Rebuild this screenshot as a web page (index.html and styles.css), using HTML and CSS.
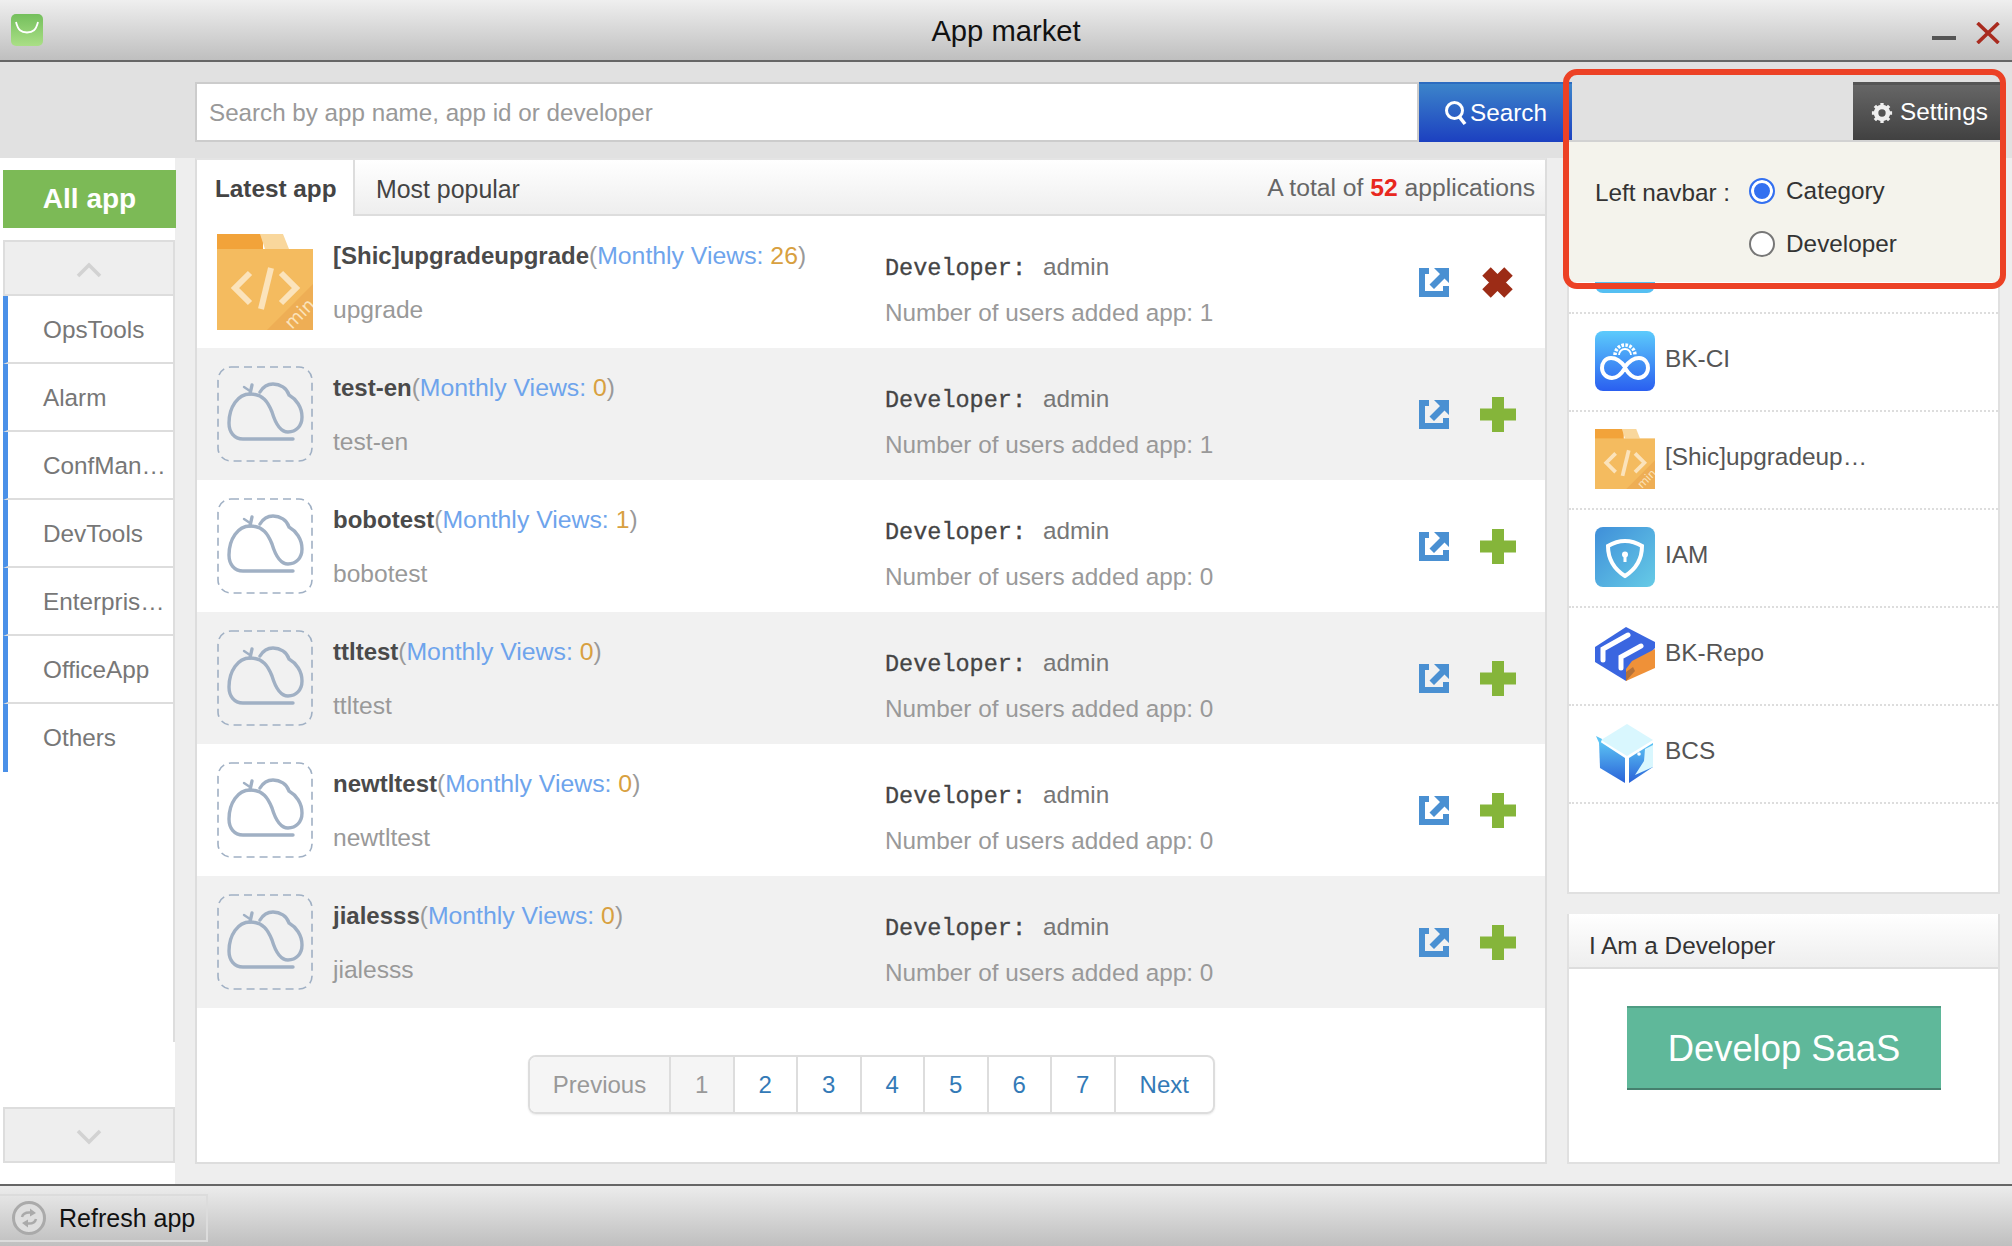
FILE: index.html
```html
<!DOCTYPE html>
<html lang="en">
<head>
    <meta charset="UTF-8">
    <title>App market</title>
    <link rel="stylesheet" href="styles.css">
</head>
<body>
    <svg class="defs" width="0" height="0">
        <defs>
            <linearGradient id="logoGrad" x1="0" y1="0" x2="0" y2="1">
                <stop offset="0" stop-color="#74bf5c"/>
                <stop offset="1" stop-color="#aadf86"/>
            </linearGradient>
            <linearGradient id="ciGrad" x1="0" y1="0" x2="0" y2="1">
                <stop offset="0" stop-color="#5ccbfc"/>
                <stop offset="1" stop-color="#2a5ff0"/>
            </linearGradient>
            <linearGradient id="iamGrad" x1="0" y1="0" x2="1" y2="1">
                <stop offset="0" stop-color="#3f8fd9"/>
                <stop offset="1" stop-color="#66cbe6"/>
            </linearGradient>
            <linearGradient id="bcsGrad" x1="0" y1="0" x2="0" y2="1">
                <stop offset="0" stop-color="#5cc4f4"/>
                <stop offset="1" stop-color="#2a62d8"/>
            </linearGradient>
            <symbol id="folder" viewBox="0 0 96 96">
                <rect width="46" height="16" fill="#f2a33a"/>
                <path d="M43 0H66L72 15H48Z" fill="#f9d79c"/>
                <rect y="15" width="96" height="81" fill="#f4bb5f"/>
                <path d="M96 50V96H50Z" fill="#eeae55"/>
                <g fill="none" stroke="#fbe3bb" stroke-width="6">
                    <path d="M33 39L18 54L33 69"/>
                    <path d="M54 34L44 75"/>
                    <path d="M64 39L79 54L64 69"/>
                </g>
                <text class="folder-min" x="75" y="96" transform="rotate(-45 75 96)">min</text>
            </symbol>
            <symbol id="cloud" viewBox="0 0 96 96">
                <rect x="1" y="1" width="94" height="94" rx="13" fill="none" stroke="#a0b0c4" stroke-width="1.6" stroke-dasharray="8 5"/>
                <g fill="none" stroke="#a0b0c4" stroke-width="3.4" stroke-linecap="round">
                    <path d="M76 73H26C17 73 12 66 12 57C12 41 21 28 33 28C46 28 51 36 55 46C58 56 63 66 71 66C79 66 85 60 85 51C85 41 79 33 72 29C70 22 63 18 56 18C50 18 46 21 43 26"/>
                    <path d="M33 28L35 19"/>
                    <path d="M27 21L33 25" stroke-width="2.4"/>
                </g>
            </symbol>
            <symbol id="open" viewBox="0 0 30 29">
                <path d="M0 0H10V6H6V23H24V18H30V29H0Z" fill="#4a90d2"/>
                <path d="M15 0H30V15L25.500 10.500L15 21L10.500 16.500L21 6Z" fill="#4a90d2"/>
            </symbol>
            <symbol id="remove" viewBox="0 0 31 33">
                <path d="M4.500 5.500L26.500 27.500M26.500 5.500L4.500 27.500" stroke="#9c2c16" stroke-width="12"/>
            </symbol>
            <symbol id="add" viewBox="0 0 36 35">
                <path d="M12 0H24V11.500H36V23.500H24V35H12V23.500H0V11.500H12Z" fill="#85b53a"/>
            </symbol>
        </defs>
    </svg>

    <div class="app">
        <header class="titlebar">
            <svg class="logo" viewBox="0 0 32 32">
                <rect width="32" height="32" rx="5" fill="url(#logoGrad)"/>
                <path d="M5 8C7 16 10 18.500 16 18.500C22 18.500 25 16 27 8" fill="none" stroke="#fff" stroke-width="1.800"/>
            </svg>
            <div class="title">App market</div>
            <div class="win-controls">
                <span class="win-min"></span>
                <svg class="win-close" viewBox="0 0 24 22">
                    <path d="M1.500 1L22.500 21M22.500 1L1.500 21" stroke="#a92b1f" stroke-width="3.600"/>
                </svg>
            </div>
        </header>

        <div class="workspace">
            <div class="search-row">
                <input class="search-input" type="text" placeholder="Search by app name, app id or developer">
                <button class="search-btn">
                    <svg class="search-icon" viewBox="0 0 24 26">
                        <circle cx="10.500" cy="10.500" r="8" fill="none" stroke="#fff" stroke-width="3"/>
                        <path d="M15.500 17L21 24" stroke="#fff" stroke-width="3.600"/>
                    </svg>Search
                </button>
                <button class="settings-btn">
                    <svg class="gear" viewBox="0 0 24 24">
                        <circle cx="12" cy="12" r="6.500" fill="none" stroke="#eee" stroke-width="5"/>
                        <path d="M12 1V5M12 19V23M1 12H5M19 12H23M4.200 4.200L7 7M17 17L19.800 19.800M19.800 4.200L17 7M7 17L4.200 19.800" stroke="#eee" stroke-width="3.600"/>
                    </svg>Settings
                </button>

                <div class="settings-pop">
                    <span class="pop-label">Left navbar :</span>
                    <div class="pop-options">
                        <label class="radio-line"><input type="radio" name="navbar" checked>Category</label>
                        <label class="radio-line"><input type="radio" name="navbar">Developer</label>
                    </div>
                </div>
            </div>

            <div class="body-row">
                <aside class="sidebar">
                    <div class="all-app">All app</div>
                    <div class="scroll-btn">
                        <svg class="chevron" viewBox="0 0 26 16"><path d="M2 14L13 3L24 14" fill="none" stroke="#d2d2d2" stroke-width="3.500"/></svg>
                    </div>
                    <div class="side-scroll">
                        <ul class="side-nav">
                            <li>OpsTools</li>
                            <li>Alarm</li>
                            <li>ConfMan…</li>
                            <li>DevTools</li>
                            <li>Enterpris…</li>
                            <li>OfficeApp</li>
                            <li>Others</li>
                        </ul>
                    </div>
                    <div class="scroll-btn scroll-down">
                        <svg class="chevron" viewBox="0 0 26 16"><path d="M2 2L13 13L24 2" fill="none" stroke="#d2d2d2" stroke-width="3.500"/></svg>
                    </div>
                </aside>

                <main class="market">
                    <div class="tabs">
                        <div class="tab active">Latest app</div>
                        <div class="tab">Most popular</div>
                        <div class="total">A total of <b>52</b> applications</div>
                    </div>

                    <div class="app-row">
                        <svg class="app-icon"><use href="#folder"/></svg>
                        <div class="app-info">
                            <div class="app-name"><b>[Shic]upgradeupgrade</b>(<span class="views">Monthly Views: <i>26</i></span>)</div>
                            <div class="app-desc">upgrade</div>
                        </div>
                        <div class="app-meta">
                            <div class="dev"><code>Developer:</code><span>admin</span></div>
                            <div class="users">Number of users added app: 1</div>
                        </div>
                        <div class="actions">
                            <svg class="act-open"><use href="#open"/></svg>
                            <svg class="act-remove"><use href="#remove"/></svg>
                        </div>
                    </div>

                    <div class="app-row">
                        <svg class="app-icon"><use href="#cloud"/></svg>
                        <div class="app-info">
                            <div class="app-name"><b>test-en</b>(<span class="views">Monthly Views: <i>0</i></span>)</div>
                            <div class="app-desc">test-en</div>
                        </div>
                        <div class="app-meta">
                            <div class="dev"><code>Developer:</code><span>admin</span></div>
                            <div class="users">Number of users added app: 1</div>
                        </div>
                        <div class="actions">
                            <svg class="act-open"><use href="#open"/></svg>
                            <svg class="act-add"><use href="#add"/></svg>
                        </div>
                    </div>

                    <div class="app-row">
                        <svg class="app-icon"><use href="#cloud"/></svg>
                        <div class="app-info">
                            <div class="app-name"><b>bobotest</b>(<span class="views">Monthly Views: <i>1</i></span>)</div>
                            <div class="app-desc">bobotest</div>
                        </div>
                        <div class="app-meta">
                            <div class="dev"><code>Developer:</code><span>admin</span></div>
                            <div class="users">Number of users added app: 0</div>
                        </div>
                        <div class="actions">
                            <svg class="act-open"><use href="#open"/></svg>
                            <svg class="act-add"><use href="#add"/></svg>
                        </div>
                    </div>

                    <div class="app-row">
                        <svg class="app-icon"><use href="#cloud"/></svg>
                        <div class="app-info">
                            <div class="app-name"><b>ttltest</b>(<span class="views">Monthly Views: <i>0</i></span>)</div>
                            <div class="app-desc">ttltest</div>
                        </div>
                        <div class="app-meta">
                            <div class="dev"><code>Developer:</code><span>admin</span></div>
                            <div class="users">Number of users added app: 0</div>
                        </div>
                        <div class="actions">
                            <svg class="act-open"><use href="#open"/></svg>
                            <svg class="act-add"><use href="#add"/></svg>
                        </div>
                    </div>

                    <div class="app-row">
                        <svg class="app-icon"><use href="#cloud"/></svg>
                        <div class="app-info">
                            <div class="app-name"><b>newtltest</b>(<span class="views">Monthly Views: <i>0</i></span>)</div>
                            <div class="app-desc">newtltest</div>
                        </div>
                        <div class="app-meta">
                            <div class="dev"><code>Developer:</code><span>admin</span></div>
                            <div class="users">Number of users added app: 0</div>
                        </div>
                        <div class="actions">
                            <svg class="act-open"><use href="#open"/></svg>
                            <svg class="act-add"><use href="#add"/></svg>
                        </div>
                    </div>

                    <div class="app-row">
                        <svg class="app-icon"><use href="#cloud"/></svg>
                        <div class="app-info">
                            <div class="app-name"><b>jialesss</b>(<span class="views">Monthly Views: <i>0</i></span>)</div>
                            <div class="app-desc">jialesss</div>
                        </div>
                        <div class="app-meta">
                            <div class="dev"><code>Developer:</code><span>admin</span></div>
                            <div class="users">Number of users added app: 0</div>
                        </div>
                        <div class="actions">
                            <svg class="act-open"><use href="#open"/></svg>
                            <svg class="act-add"><use href="#add"/></svg>
                        </div>
                    </div>

                    <div class="pager">
                        <a class="off pg-prev">Previous</a>
                        <a class="off pg-num">1</a>
                        <a class="pg-num">2</a>
                        <a class="pg-num">3</a>
                        <a class="pg-num">4</a>
                        <a class="pg-num">5</a>
                        <a class="pg-num">6</a>
                        <a class="pg-num">7</a>
                        <a class="pg-next">Next</a>
                    </div>
                </main>

                <div class="right-col">
                    <section class="added-list">
                        <div class="added-item">
                            <svg class="added-icon" viewBox="0 0 60 60"><rect width="60" height="60" rx="8" fill="#55bff2"/></svg>
                        </div>
                        <div class="added-item">
                            <svg class="added-icon" viewBox="0 0 60 60">
                                <rect width="60" height="60" rx="8" fill="url(#ciGrad)"/>
                                <g fill="none" stroke="#fff">
                                    <path d="M30 36C25 29 20 27 16 27C10 27 7 32 7 37C7 42 11 47 17 47C23 47 27 42 30 37C33 42 37 47 43 47C49 47 53 42 53 37C53 32 50 27 44 27C40 27 35 29 30 36Z" stroke-width="4"/>
                                    <path d="M20 24A10 10 0 0 1 40 24" stroke-width="3.500" stroke-dasharray="2.600 1.400"/>
                                    <path d="M24 24A6 6 0 0 1 36 24" stroke-width="1.800"/>
                                </g>
                            </svg>
                            <span class="added-name">BK-CI</span>
                        </div>
                        <div class="added-item">
                            <svg class="added-icon"><use href="#folder"/></svg>
                            <span class="added-name">[Shic]upgradeup…</span>
                        </div>
                        <div class="added-item">
                            <svg class="added-icon" viewBox="0 0 60 60">
                                <rect width="60" height="60" rx="8" fill="url(#iamGrad)"/>
                                <path d="M30 14C36 14 42 16 47 19C47 31 41 42 30 49C19 42 13 31 13 19C18 16 24 14 30 14Z" fill="none" stroke="#fff" stroke-width="4"/>
                                <circle cx="30" cy="27.500" r="3" fill="#fff"/>
                                <rect x="28.500" y="28" width="3" height="7" fill="#fff"/>
                            </svg>
                            <span class="added-name">IAM</span>
                        </div>
                        <div class="added-item">
                            <svg class="added-icon" viewBox="0 0 60 60">
                                <path d="M31 2L60 17V23L31 56L0 37V22Z" fill="#3a66e0"/>
                                <path d="M31 56V44L37 36L60 24V43Z" fill="#ef9138"/>
                                <path d="M31 56V47L38 42L40 46Z" fill="#b4723a"/>
                                <path d="M8 35V24L33 10" fill="none" stroke="#fff" stroke-width="5" stroke-linecap="round"/>
                                <path d="M26 43V32L46 21" fill="none" stroke="#fff" stroke-width="5" stroke-linecap="round"/>
                            </svg>
                            <span class="added-name">BK-Repo</span>
                        </div>
                        <div class="added-item">
                            <svg class="added-icon" viewBox="0 0 60 60">
                                <path d="M32 1L58 17L32 33L6 17Z" fill="#d9f7fe"/>
                                <path d="M4 18L30 35V60L5 45Z" fill="url(#bcsGrad)"/>
                                <path d="M34 35L58 20V44L34 60Z" fill="url(#bcsGrad)"/>
                                <path d="M58 22L50 26L49 38L40 52L58 44Z" fill="#d9f7fe"/>
                                <circle cx="44" cy="31" r="1.800" fill="#fff"/>
                                <path d="M1 13L7 16L5 22Z" fill="#5cc4f4"/>
                            </svg>
                            <span class="added-name">BCS</span>
                        </div>
                    </section>

                    <section class="dev-panel">
                        <div class="dev-head">I Am a Developer</div>
                        <div class="dev-body">
                            <a class="dev-btn">Develop SaaS</a>
                        </div>
                    </section>
                </div>
            </div>
        </div>

        <footer class="statusbar">
            <div class="refresh">
                <svg class="refresh-icon" viewBox="0 0 36 36">
                    <circle cx="18" cy="18" r="15.500" fill="#dedede" stroke="#aaa" stroke-width="3"/>
                    <path d="M11 17C12 13 15 12 20 12.500M25 19C24 23 21 24 16 23.500" fill="none" stroke="#aaa" stroke-width="2.500"/>
                    <path d="M19 8.500L25 13L19 16.500ZM17 19.500L11 23L17 27.500Z" fill="#aaa"/>
                </svg>
                <span>Refresh app</span>
            </div>
        </footer>

        <!-- annotation round the settings area -->
        <div class="highlight"></div>
    </div>
</body>
</html>
```

FILE: styles.css
```css
* {
    box-sizing: border-box;
}
html, body {
    margin: 0;
    height: 100%;
}
body {
    font-family: "Liberation Sans", Arial, sans-serif;
    font-size: 24.3px;
    color: #555;
    background: #eee;
    overflow: hidden;
}
.defs {
    position: absolute;
}
.folder-min {
    font-family: "DejaVu Sans", sans-serif;
    font-size: 18px;
    fill: #fbe3bb;
}
.app {
    position: relative;
    display: flex;
    flex-direction: column;
    height: 1246px;
}

/* title bar */
.titlebar {
    position: relative;
    flex: none;
    display: flex;
    align-items: center;
    justify-content: center;
    height: 62px;
    padding-top: 2px;
    border-bottom: 2px solid #666;
    background: linear-gradient(#efefef, #bfbfbf);
}
.logo {
    position: absolute;
    left: 11px;
    top: 14px;
    width: 32px;
    height: 32px;
}
.title {
    font-size: 29.2px;
    color: #111;
}
.win-controls {
    position: absolute;
    right: 12px;
    top: 22px;
    display: flex;
    align-items: flex-end;
    gap: 20px;
}
.win-min {
    width: 24px;
    height: 4px;
    margin-bottom: 4px;
    background: #555;
}
.win-close {
    width: 24px;
    height: 22px;
}

/* search row */
.workspace {
    flex: 1;
    display: flex;
    flex-direction: column;
    min-height: 0;
}
.search-row {
    position: relative;
    flex: none;
    display: flex;
    align-items: flex-start;
    height: 96px;
    padding: 20px 12px 0 195px;
    background: #e1e1e1;
}
.search-input {
    width: 1224px;
    height: 60px;
    padding: 2px 12px 0;
    border: 2px solid #ccc;
    font: 24.2px "Liberation Sans", Arial, sans-serif;
    background: #fff;
}
.search-input::placeholder {
    color: #999;
    opacity: 1;
}
.search-btn {
    display: flex;
    align-items: center;
    justify-content: flex-start;
    width: 153px;
    height: 60px;
    padding: 0 0 0 25px;
    border: 0;
    border-top: 2px solid #2c6cc0;
    color: #fff;
    font: 24.3px "Liberation Sans", Arial, sans-serif;
    background: linear-gradient(#3c84ca, #1c40c0);
}
.search-icon {
    width: 24px;
    height: 26px;
    margin-right: 2px;
}
.settings-btn {
    display: flex;
    align-items: center;
    width: 147px;
    height: 58px;
    margin-left: auto;
    padding: 0 0 2px 18px;
    border: 0;
    border-top: 3px solid #555;
    color: #fff;
    font: 24.3px "Liberation Sans", Arial, sans-serif;
    background: linear-gradient(#666, #414141);
}
.gear {
    width: 22px;
    height: 22px;
    margin: 3px 7px 0 0;
}
.settings-pop {
    position: absolute;
    top: 78px;
    right: 12px;
    z-index: 5;
    display: flex;
    gap: 19px;
    width: 431px;
    height: 142px;
    padding: 31px 0 0 26px;
    border-top: 2px solid #d2d2d2;
    background: #f4f3ec;
    color: #333;
}
.pop-label {
    padding-top: 2px;
    line-height: 36px;
}
.pop-options {
    display: flex;
    flex-direction: column;
    gap: 17px;
}
.radio-line {
    display: flex;
    align-items: center;
    gap: 11px;
    height: 36px;
}
.radio-line input {
    appearance: none;
    width: 26px;
    height: 26px;
    margin: 0;
    border: 2px solid #777;
    border-radius: 50%;
    background: #fff;
}
.radio-line input:checked {
    border-color: #3370f0;
    background: #3370f0;
    box-shadow: inset 0 0 0 3px #fff;
}

/* three columns */
.body-row {
    flex: 1;
    display: flex;
    min-height: 0;
}
.sidebar {
    flex: none;
    width: 175px;
    padding: 12px 0 0 3px;
    background: #fff;
}
.all-app {
    width: 173px;
    height: 58px;
    line-height: 58px;
    text-align: center;
    font-size: 28px;
    font-weight: bold;
    color: #fff;
    background: #7cba56;
}
.scroll-btn {
    display: flex;
    align-items: center;
    justify-content: center;
    width: 172px;
    height: 56px;
    margin-top: 12px;
    padding-top: 4px;
    border: 2px solid #ddd;
    background: #eee;
}
.scroll-down {
    margin-top: 65px;
}
.chevron {
    width: 26px;
    height: 16px;
}
.side-scroll {
    width: 172px;
    height: 746px;
    border-right: 2px solid #ddd;
}
.side-nav {
    margin: 0;
    padding: 0;
    list-style: none;
}
.side-nav li {
    height: 68px;
    line-height: 68px;
    padding: 0 0 0 35px;
    border-left: 5px solid #4a90e8;
    border-bottom: 2px solid #ddd;
    color: #777;
    white-space: nowrap;
}
.side-nav li:last-child {
    border-bottom: 0;
}
.market {
    flex: none;
    width: 1352px;
    height: 1006px;
    margin-left: 20px;
    border: 2px solid #ddd;
    border-top: 2px solid #e4e4e4;
    background: #fff;
}
.tabs {
    display: flex;
    align-items: stretch;
    height: 56px;
    border-bottom: 2px solid #ddd;
    background: linear-gradient(#fff, #eee);
}
.tab {
    padding: 0 24px 0 40px;
    line-height: 58px;
    font-size: 24.9px;
    color: #444;
}
.tab.active {
    width: 158px;
    height: 56px;
    padding: 0 0 0 18px;
    border-right: 2px solid #ddd;
    font-size: 24.3px;
    font-weight: bold;
    background: #fff;
}
.tab + .tab {
    padding-left: 21px;
}
.total {
    margin-left: auto;
    padding-right: 10px;
    line-height: 55px;
    font-size: 24.7px;
    color: #666;
}
.total b {
    color: #e8281e;
}

/* app rows */
.app-row {
    display: flex;
    height: 132px;
    padding-left: 20px;
}
.app-row:nth-child(odd) {
    background: #f1f1f1;
}
.app-icon {
    flex: none;
    width: 96px;
    height: 96px;
    margin-top: 18px;
}
.app-info {
    flex: none;
    width: 572px;
    padding: 25px 0 0 20px;
}
.app-name {
    line-height: 30px;
    font-size: 24.4px;
    color: #999;
}
.app-name b {
    font-size: 24px;
    color: #4a4a4a;
}
.views {
    font-size: 24.8px;
    color: #6ea4ec;
}
.views i {
    font-style: normal;
    color: #d8a040;
}
.app-desc {
    margin-top: 24px;
    line-height: 30px;
    font-size: 24.6px;
    color: #999;
}
.app-meta {
    flex: none;
    width: 534px;
    padding-top: 36px;
}
.dev {
    display: flex;
    line-height: 30px;
    color: #777;
}
.dev code {
    width: 158px;
    padding-top: 2px;
    font-family: "Liberation Mono", "Courier New", monospace;
    font-size: 23.5px;
    color: #444;
    -webkit-text-stroke: 0.3px #444;
}
.users {
    margin-top: 14px;
    line-height: 30px;
    color: #999;
}
.actions {
    display: flex;
    align-items: center;
    gap: 31px;
    height: 132px;
}
.act-open {
    width: 30px;
    height: 29px;
}
.act-remove {
    width: 31px;
    height: 33px;
    margin: 0 3px 0 2px;
}
.act-add {
    width: 36px;
    height: 35px;
}

/* pagination */
.pager {
    display: flex;
    width: 687px;
    height: 59px;
    margin: 47px 0 0 331px;
    border: 2px solid #ddd;
    border-radius: 8px;
    font-size: 24px;
    box-shadow: 0 1px 2px rgba(0, 0, 0, 0.08);
    overflow: hidden;
}
.pager a {
    display: block;
    line-height: 55px;
    text-align: center;
    color: #337ab7;
    border-right: 2px solid #ddd;
}
.pager a:last-child {
    border-right: 0;
}
.pager a.off {
    color: #999;
    background: #f5f5f5;
}
.pg-prev {
    width: 141px;
}
.pg-num {
    width: 63.5px;
}
.pg-next {
    flex: 1;
}

/* right column */
.right-col {
    flex: none;
    display: flex;
    flex-direction: column;
    gap: 20px;
    width: 433px;
    height: 1006px;
    margin-left: 20px;
}
.added-list {
    flex: none;
    height: 736px;
    padding-top: 56px;
    border: 2px solid #e0e0e0;
    background: #fff;
}
.added-item {
    display: flex;
    gap: 10px;
    height: 98px;
    padding: 17px 0 0 26px;
    border-bottom: 2px dotted #ddd;
}
.added-icon {
    flex: none;
    width: 60px;
    height: 60px;
}
.added-name {
    line-height: 56px;
    font-size: 24.4px;
    color: #555;
}
.dev-panel {
    flex: 1;
    border: 2px solid #e0e0e0;
    border-top: 0;
    background: #fff;
}
.dev-head {
    height: 55px;
    padding-left: 20px;
    line-height: 64px;
    color: #333;
    border-bottom: 2px solid #ddd;
    background: linear-gradient(#fff, #eee);
}
.dev-body {
    padding: 37px 0 0 58px;
}
.dev-btn {
    display: block;
    width: 314px;
    height: 84px;
    line-height: 82px;
    text-align: center;
    font-size: 36.4px;
    color: #fff;
    border-top: 2px solid #4f9c83;
    border-bottom: 2px solid #46806e;
    background: #5fb89a;
}

/* status bar */
.statusbar {
    flex: none;
    height: 62px;
    padding-top: 8px;
    border-top: 2px solid #666;
    background: linear-gradient(#ececec, #bfbfbf);
}
.refresh {
    display: flex;
    align-items: center;
    gap: 12px;
    width: 208px;
    height: 48px;
    padding-left: 11px;
    border: 2px solid #dcdcdc;
    border-left: 0;
    font-size: 25px;
    color: #111;
}
.refresh-icon {
    width: 36px;
    height: 36px;
}

/* red annotation */
.highlight {
    position: absolute;
    top: 69px;
    left: 1563px;
    z-index: 10;
    width: 443px;
    height: 220px;
    border: 6px solid #ec4125;
    border-radius: 14px;
    pointer-events: none;
}
```
